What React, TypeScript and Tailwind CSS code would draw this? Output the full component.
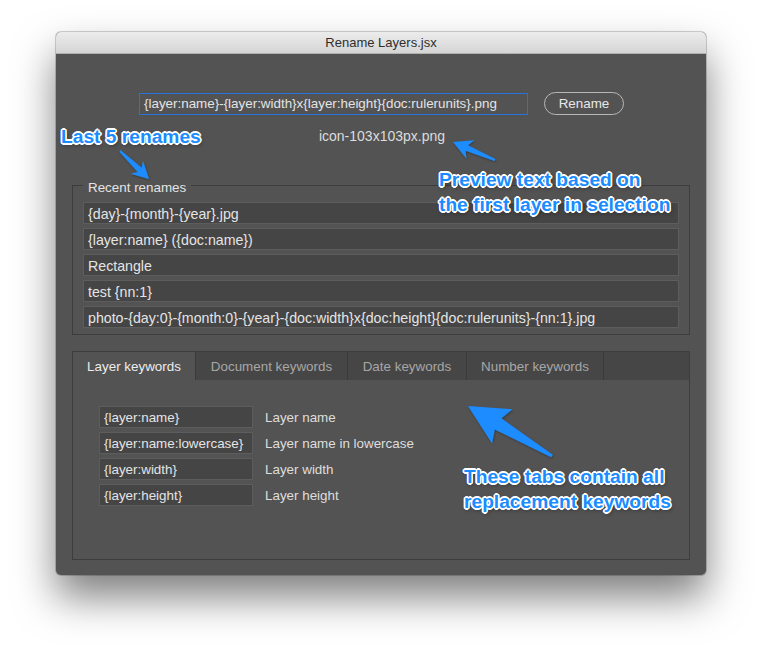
import { ReactElement } from "react";

const recent = [
  "{day}-{month}-{year}.jpg",
  "{layer:name} ({doc:name})",
  "Rectangle",
  "test {nn:1}",
  "photo-{day:0}-{month:0}-{year}-{doc:width}x{doc:height}{doc:rulerunits}-{nn:1}.jpg",
];

const keywords = [
  { key: "{layer:name}", label: "Layer name" },
  { key: "{layer:name:lowercase}", label: "Layer name in lowercase" },
  { key: "{layer:width}", label: "Layer width" },
  { key: "{layer:height}", label: "Layer height" },
];

const tabs = [
  { name: "Layer keywords", w: "w-[123px]" },
  { name: "Document keywords", w: "w-[152px]" },
  { name: "Date keywords", w: "w-[119px]" },
  { name: "Number keywords", w: "w-[137px]" },
];

// arrow polygon from tail to tip
const arrow = (
  tx: number,
  ty: number,
  px: number,
  py: number,
  hl: number,
  hw: number,
  nl: number,
  sw: number,
  tw: number
): string => {
  const len = Math.hypot(tx - px, ty - py);
  const ux = (tx - px) / len;
  const uy = (ty - py) / len;
  const nx = -uy;
  const ny = ux;
  const pts = [
    [px, py],
    [px + ux * hl + nx * hw, py + uy * hl + ny * hw],
    [px + ux * nl + nx * sw, py + uy * nl + ny * sw],
    [tx + nx * tw, ty + ny * tw],
    [tx - nx * tw, ty - ny * tw],
    [px + ux * nl - nx * sw, py + uy * nl - ny * sw],
    [px + ux * hl - nx * hw, py + uy * hl - ny * hw],
  ];
  return pts.map((p) => `${p[0].toFixed(1)},${p[1].toFixed(1)}`).join(" ");
};

const Note = ({ className, children }: { className: string; children: React.ReactNode }): ReactElement => (
  <div
    className={`absolute whitespace-nowrap font-['Liberation_Sans',Arial,sans-serif] text-[19.2px] font-bold leading-[25px] text-[#1b8cff] [text-shadow:1.6px_0_0_#fff,-1.6px_0_0_#fff,0_1.6px_0_#fff,0_-1.6px_0_#fff,1.2px_1.2px_0_#fff,-1.2px_-1.2px_0_#fff,1.2px_-1.2px_0_#fff,-1.2px_1.2px_0_#fff,1px_2px_4px_rgba(0,0,0,0.55)] ${className}`}
  >
    {children}
  </div>
);

const App = (): ReactElement => {
  return (
    <div className="relative h-[656px] w-[762px] overflow-hidden bg-white font-['Liberation_Sans',Arial,sans-serif] text-[13.4px]">
      <div className="pl-[56px] pt-[32px]">
        <div className="flex h-[543px] w-[650px] flex-col overflow-hidden rounded-[5px] bg-[#535353] shadow-[0_0_0_1px_rgba(0,0,0,0.18),0_22px_40px_rgba(0,0,0,0.5)]">
          {/* title bar */}
          <div className="flex h-[22px] shrink-0 items-center justify-center border-b border-[#b1b1b1] bg-gradient-to-b from-[#ececec] to-[#d5d5d5] text-[13px] text-[#2e2e2e]">
            Rename Layers.jsx
          </div>

          <div className="flex flex-col px-[16px] pt-[38px]">
            <div className="flex items-center justify-center gap-[16px] pl-[1px]">
              <div className="flex h-[22px] w-[389px] items-center border border-[#2474dc] bg-[#535353] px-[4px] pt-[1px] text-[#e4e4e4]">
                {"{layer:name}-{layer:width}x{layer:height}{doc:rulerunits}.png"}
              </div>
              <button className="flex h-[23px] w-[80px] items-center justify-center rounded-full border border-[#b8b8b8] pt-[1px] text-[#e8e8e8]">
                Rename
              </button>
            </div>

            <div className="mt-[13px] pl-[2px] text-center text-[14px] leading-4 text-[#dcdcdc]">icon-103x103px.png</div>

            <fieldset className="mt-[33px] w-[618px] border border-[#3d3d3d] px-[10px] pb-[6px] pt-[9px]">
              <legend className="px-[5px] leading-4 text-[#e4e4e4]">
                <span className="relative top-[3px]">Recent renames</span>
              </legend>
              <div className="flex flex-col gap-[4px]">
                {recent.map((r) => (
                  <div
                    key={r}
                    className="flex h-[22px] items-center border border-[#5d5d5d] bg-[#454545] px-[4px] pt-[3px] text-[14.2px] text-[#e4e4e4]"
                  >
                    {r}
                  </div>
                ))}
              </div>
            </fieldset>

            <div className="mt-[16px] flex h-[209px] w-[618px] flex-col border border-[#3d3d3d]">
              <div className="flex h-[28px] shrink-0 bg-[#464646]">
                {tabs.map((t, i) => (
                  <div
                    key={t.name}
                    className={`flex ${t.w} items-center justify-center border-r border-[#3a3a3a] pt-[2px] ${
                      i === 0 ? "bg-[#535353] text-[#ececec]" : "text-[#a6a6a6]"
                    }`}
                  >
                    {t.name}
                  </div>
                ))}
              </div>
              <div className="flex flex-col gap-[4px] pl-[26px] pt-[26px]">
                {keywords.map((k) => (
                  <div key={k.key} className="flex items-center gap-[12px]">
                    <div className="flex h-[22px] w-[154px] items-center border border-[#5d5d5d] bg-[#454545] px-[4px] pt-[2px] text-[#e4e4e4]">
                      {k.key}
                    </div>
                    <div className="pt-[2px] text-[#dedede]">{k.label}</div>
                  </div>
                ))}
              </div>
            </div>
          </div>
        </div>
      </div>

      {/* annotations */}
      <svg className="pointer-events-none absolute left-0 top-0" width="762" height="656">
        <defs>
          <filter id="sh" x="-20%" y="-20%" width="140%" height="140%">
            <feDropShadow dx="0.5" dy="1" stdDeviation="1" floodColor="#000" floodOpacity="0.35" />
          </filter>
        </defs>
        <g fill="#1b8cff" filter="url(#sh)">
          <polygon points={arrow(120, 151, 149, 179, 17, 9, 13, 3, 1)} />
          <polygon points={arrow(495, 160, 453, 142, 19, 10, 15, 3, 1)} />
          <polygon points={arrow(552, 456, 468, 406, 40, 20, 35, 6.5, 1.5)} />
        </g>
      </svg>

      <Note className="left-[61px] top-[124px]">Last 5 renames</Note>
      <Note className="left-[439px] top-[167px]">
        Preview text based on
        <br />
        the first layer in selection
      </Note>
      <Note className="left-[464px] top-[464px]">
        These tabs contain all
        <br />
        replacement keywords
      </Note>
    </div>
  );
};

export default App;
